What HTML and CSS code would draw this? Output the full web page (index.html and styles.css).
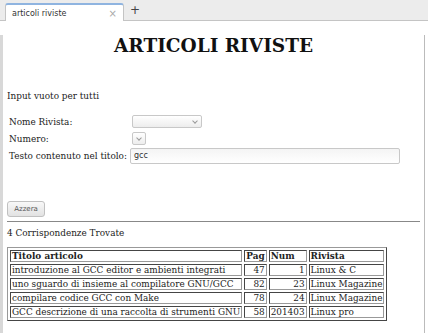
FILE: index.html
```html
<!DOCTYPE html>
<html lang="it">
<head>
  <meta charset="UTF-8" />
  <title>articoli riviste</title>
  <link rel="stylesheet" href="styles.css">
</head>
<body>
  <div class="tab-bar">
    <div class="tab">
      <span class="tab-title">articoli riviste</span>
      <span class="tab-close">×</span>
    </div>
    <span class="tab-new">+</span>
  </div>

  <div class="viewport">
    <div class="page">
      <h1>ARTICOLI RIVISTE</h1>

      <p class="hint">Input vuoto per tutti</p>

      <table class="search">
        <tr>
          <td>Nome Rivista:</td>
          <td><span class="select wide"></span></td>
        </tr>
        <tr>
          <td>Numero:</td>
          <td><span class="select"></span></td>
        </tr>
        <tr>
          <td>Testo contenuto nel titolo:</td>
          <td><span class="text-input">gcc</span></td>
        </tr>
      </table>

      <button class="reset-btn">Azzera</button>
      <hr>

      <p class="count">4 Corrispondenze Trovate</p>

      <table class="results">
        <tr>
          <th>Titolo articolo</th>
          <th>Pag</th>
          <th>Num</th>
          <th>Rivista</th>
        </tr>
        <tr>
          <td>introduzione al GCC editor e ambienti integrati</td>
          <td class="num">47</td>
          <td class="num">1</td>
          <td>Linux &amp; C</td>
        </tr>
        <tr>
          <td>uno sguardo di insieme al compilatore GNU/GCC</td>
          <td class="num">82</td>
          <td class="num">23</td>
          <td>Linux Magazine</td>
        </tr>
        <tr>
          <td>compilare codice GCC con Make</td>
          <td class="num">78</td>
          <td class="num">24</td>
          <td>Linux Magazine</td>
        </tr>
        <tr>
          <td>GCC descrizione di una raccolta di strumenti GNU</td>
          <td class="num">58</td>
          <td class="num">201403</td>
          <td>Linux pro</td>
        </tr>
      </table>
    </div>
  </div>
</body>
</html>
```

FILE: styles.css
```css
* { box-sizing: border-box; margin: 0; padding: 0; }
body { background: #fff; font-family: "DejaVu Serif", serif; font-size: 8.9px; color: #222; height: 333px; overflow: hidden; }

.tab-bar {
  height: 21px; background: #ececec;
  border-bottom: 1px solid #c4c4c4;
  display: flex; align-items: flex-end; padding-left: 5px;
  font-family: "DejaVu Sans", sans-serif;
}
.tab {
  width: 119px; height: 18px; background: #fff;
  border: 1px solid #c4c4c4; border-top: 2px solid #8fb4e0; border-bottom: none;
  border-radius: 3px 3px 0 0;
  display: flex; align-items: center; justify-content: space-between;
  padding: 0 6px 0 6px; margin-bottom: -1px;
}
.tab-title { font-size: 8px; color: #333; }
.tab-close { font-size: 10px; color: #aaa; }
.tab-new { font-size: 12px; color: #444; margin: 0 0 3px 6px; }

.viewport {
  width: 425px; height: 312px;
  border-right: 1px solid #bbb; border-left: 3px solid #d8d8d8;
  padding: 0 4px;
}

h1 { font-size: 18.5px; text-align: center; margin: 14px 0 0; color: #111; }

.hint { margin-top: 35px; }

.search { margin-top: 12px; border-collapse: separate; border-spacing: 0; }
.search td { padding: 1px 1px 1px 2px; height: 17px; vertical-align: middle; }

.select {
  display: block; width: 14px; height: 13px; margin-left: 2px;
  border: 1px solid #c8c8c8; border-radius: 2px;
  background: linear-gradient(#fff, #ededed);
  position: relative;
}
.select.wide { width: 70px; }
.select::after {
  content: ""; position: absolute; right: 4px; top: 3px;
  width: 3px; height: 3px;
  border-right: 1px solid #999; border-bottom: 1px solid #999;
  transform: rotate(45deg);
}

.text-input {
  display: block; width: 270px; height: 16px;
  border: 1px solid #c8c8c8; border-radius: 2px;
  background: linear-gradient(#f4f4f4, #fff);
  font-family: "DejaVu Sans", sans-serif; font-size: 8px; line-height: 14px;
  padding-left: 3px; color: #333;
}

.reset-btn {
  display: block; margin-top: 36px; margin-left: 0;
  width: 38px; height: 16px;
  border: 1px solid #c0c0c0; border-radius: 3px;
  background: linear-gradient(#f8f8f8, #e2e2e2);
  font-family: "DejaVu Sans", sans-serif; font-size: 7px; color: #555;
}

hr { border: none; border-top: 1px solid #888; margin: 4px 0 0 0; width: 413px; }

.count { margin: 6px 0 0 0; }

.results {
  margin: 9px 0 0 0;
  border: 1px outset #999; border-spacing: 2px;
}
.results th, .results td {
  border: 1px inset #999; padding: 0 1px; text-align: left; white-space: nowrap;
}
.results td.num { text-align: right; }
```
